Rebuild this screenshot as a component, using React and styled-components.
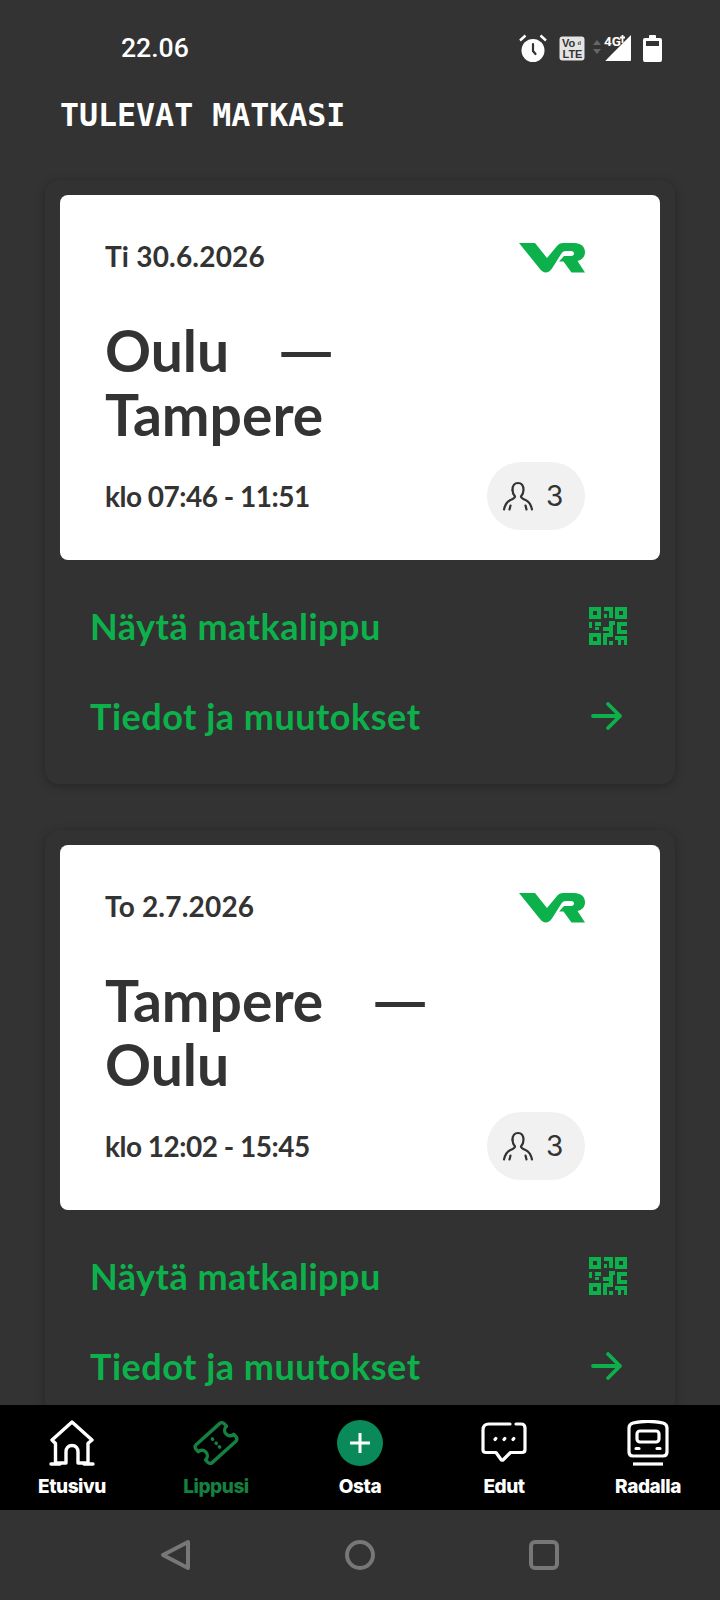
import React from 'react'
import styled, { createGlobalStyle } from 'styled-components'

const GREEN = '#0db14b'
const DARK = '#333333'

const GlobalStyle = createGlobalStyle`
  html, body {
    margin: 0;
    padding: 0;
    background: ${DARK};
  }
  * {
    box-sizing: border-box;
  }
`

const Screen = styled.div`
  width: 720px;
  height: 1600px;
  display: flex;
  flex-direction: column;
  overflow: hidden;
  background: ${DARK};
  font-family: "Lato", "Liberation Sans", sans-serif;
`

const StatusBar = styled.div`
  height: 72px;
  flex: none;
  display: flex;
  align-items: flex-end;
  justify-content: space-between;
  padding: 0 58px 7px 121px;
`

const Clock = styled.div`
  font-family: "Roboto", sans-serif;
  font-weight: 500;
  font-size: 26.6px;
  line-height: 34px;
  color: #fff;
`

const StatusIcons = styled.div`
  display: flex;
  align-items: center;
  gap: 12px;
  height: 34px;
`

const SignalSvg = styled.svg`
  margin-left: -4px;
`

const Content = styled.main`
  flex: 1;
  min-height: 0;
  overflow: hidden;
  display: flex;
  flex-direction: column;
  padding: 23px 45px 0;
`

const Heading = styled.h1`
  margin: 0 0 45px 15px;
  font-family: "DejaVu Sans Mono", monospace;
  font-weight: 700;
  font-size: 31.6px;
  line-height: 40px;
  color: #fff;
`

const TripList = styled.div`
  display: flex;
  flex-direction: column;
  gap: 46px;
`

const TripPanel = styled.section`
  flex: none;
  width: 630px;
  height: 604px;
  padding: 15px;
  border-radius: 14px;
  background: #323232;
  box-shadow: 0 2px 10px rgba(0, 0, 0, 0.28);
`

const TicketCard = styled.div`
  height: 365px;
  padding: 43px 75px 30px 45px;
  border-radius: 8px;
  background: #fff;
  color: ${DARK};
  display: flex;
  flex-direction: column;
`

const CardTop = styled.div`
  display: flex;
  justify-content: space-between;
  align-items: center;
  height: 36px;
`

const DateText = styled.div`
  font-size: 28px;
  font-weight: 700;
  line-height: 36px;
  letter-spacing: 0.2px;
`

const LogoSvg = styled.svg`
  margin-top: 4px;
`

const Route = styled.h2`
  margin: 44px 0 0;
  width: 420px;
  font-size: 57px;
  font-weight: 700;
  line-height: 64px;
`

const RouteDash = styled.span`
  display: inline-block;
  transform: scaleX(1.28);
  transform-origin: left center;
  margin-left: 34px;
`

const CardBottom = styled.div`
  margin-top: auto;
  display: flex;
  justify-content: space-between;
  align-items: center;
`

const TimeText = styled.div`
  font-size: 28px;
  font-weight: 700;
  line-height: 36px;
  letter-spacing: -0.5px;
  margin-top: -3px;
`

const Passengers = styled.div`
  width: 98px;
  height: 68px;
  border-radius: 34px;
  background: #f1f1f1;
  display: flex;
  align-items: center;
  gap: 12px;
  padding-left: 15px;
  font-family: "Inter", sans-serif;
  font-size: 28px;
  line-height: 64px;
  color: ${DARK};
  margin-top: -2px;
`

const ActionList = styled.div`
  display: flex;
  flex-direction: column;
  padding-top: 21px;
`

const ActionRow = styled.a`
  height: 90px;
  display: flex;
  align-items: center;
  justify-content: space-between;
  padding: 0 33px 0 30px;
  color: ${GREEN};
  font-size: 36px;
  font-weight: 700;
  letter-spacing: 0.5px;
`

const ArrowSvg = styled.svg`
  margin-right: 4px;
`

const BottomNav = styled.nav`
  flex: none;
  height: 105px;
  background: #000;
  display: grid;
  grid-template-columns: repeat(5, 1fr);
`

const NavItem = styled.a`
  display: flex;
  flex-direction: column;
  align-items: center;
  padding-top: 13px;
  color: ${p => (p.$active ? '#15803f' : '#fff')};
  font-family: "Inter", "Liberation Sans", sans-serif;
  font-size: 19px;
  line-height: 24px;
  font-weight: 800;
  letter-spacing: -0.45px;
`

const NavIcon = styled.div`
  height: 50px;
  display: flex;
  align-items: center;
  justify-content: center;
  margin-bottom: 7px;
`

const BuyCircle = styled.div`
  width: 46px;
  height: 46px;
  border-radius: 50%;
  background: #0a8a5a;
  display: flex;
  align-items: center;
  justify-content: center;
`

const SystemNav = styled.div`
  flex: none;
  height: 90px;
  background: #333;
  display: flex;
  justify-content: center;
  align-items: center;
  gap: 152px;
`

const AlarmIcon = () => (
  <svg width="28" height="30" viewBox="0 0 28 30" fill="none">
    <circle cx="14" cy="17.500" r="11.500" fill="#fff" />
    <path d="M14 11v7l2.500 3" stroke="#333" strokeWidth="2.200" strokeLinecap="round" />
    <path d="M1 7.500l5.500-5M27 7.500l-5.500-5" stroke="#fff" strokeWidth="2.400" />
  </svg>
)

const VolteIcon = () => (
  <svg width="26" height="25" viewBox="0 0 26 25">
    <rect x="0.5" y="0.500" width="25" height="24" rx="3" fill="#e4e4e4" />
    <text x="3" y="11" fontFamily="Liberation Sans" fontSize="11" fontWeight="700" fill="#333">Vo</text>
    <text x="18.500" y="9" fontFamily="Liberation Sans" fontSize="6" fontWeight="700" fill="#333">ıl</text>
    <text x="3.500" y="21.500" fontFamily="Liberation Sans" fontSize="11" fontWeight="700" fill="#333">LTE</text>
  </svg>
)

const SignalIcon = () => (
  <SignalSvg width="38" height="30" viewBox="0 0 38 30">
    <path d="M0 12l4-5 4 5zM0 16h8l-4 5z" fill="#666" />
    <path d="M38 2v25a1 1 0 0 1-1 1H12z" fill="#fff" />
    <path d="M12 28L35 2H11v26z" fill={DARK} />
    <text x="11" y="12.500" fontFamily="Roboto" fontSize="13.500" fontWeight="700" fill="#fff">4G</text>
    <path d="M29.500 2v8M27 4.500h5" stroke="#fff" strokeWidth="1.800" />
  </SignalSvg>
)

const BatteryIcon = () => (
  <svg width="19" height="27" viewBox="0 0 19 27">
    <path d="M6 1a1 1 0 0 1 1-1h5a1 1 0 0 1 1 1v2h4a2 2 0 0 1 2 2v20a2 2 0 0 1-2 2H2a2 2 0 0 1-2-2V5a2 2 0 0 1 2-2h4z" fill="#fff" />
    <rect x="3" y="6" width="13" height="5" fill="#333" />
  </svg>
)

const VrLogo = () => (
  <LogoSvg width="66" height="30" viewBox="0 0 66 30">
    <path
      d="M0 0H16L28 15 38 3C39.600 1 41.500 0 44 0H55C62 0 66 3.600 66 9.200 66 14 63 17 58.500 18L66 29.500H52.500L44.500 18.500H40L45 13H52C54 13 55 12 55 10.500 55 9 54 8 52 8H47C45 8 43.800 8.700 42.600 10.200L33 25.500C31 28.200 29.200 29.500 26.800 29.500 24.600 29.500 22.800 28.300 20.800 25.800z"
      fill={GREEN}
    />
  </LogoSvg>
)

const PersonIcon = () => (
  <svg width="32" height="30" viewBox="0 0 32 30" fill="none" stroke="#333" strokeWidth="2.200" strokeLinecap="round" strokeLinejoin="round">
    <path d="M10.500 9c0-4.500 2.200-7 5.500-7s5.500 2.500 5.500 7c0 3-1.300 5-2.500 6.500 0 1.500 2 2.500 4.500 3.500 3.500 1.500 5.500 5 6.500 9.500" />
    <path d="M10.500 9c0 3 1.300 5 2.500 6.500 0 1.500-2 2.500-4.500 3.500C5 20.500 3 24 2 28.500" />
    <path d="M7.500 28.500l1-4M24.500 28.500l-1-4" />
  </svg>
)

const QrIcon = () => (
  <svg width="38" height="38" viewBox="0 0 38 38" fill={GREEN}>
    <path fillRule="evenodd" d="M0 0h12v12H0zM4 4v4h4V4zM26 0h12v12H26zM30 4v4h4V4zM0 26h12v12H0zM4 30v4h4v-4z" />
    <path d="M15 0h9v11h-4V4h-5zM15 7h3v4h-3zM0 15h3v6H0zM6 15h6v4H6zM6 20h4v3H6zM26 14h-6v6h-6v4h10v-6h2zM14 26h4v12h-4zM18 26h5v4h-5zM28 15h10v4h-6v4h6v4H28zM20 34h4v4h-4zM20 24h4v6h-4zM26 29h12v9h-3v-5h-3v5h-3v-5h-3z" />
  </svg>
)

const ArrowIcon = () => (
  <ArrowSvg width="32" height="30" viewBox="0 0 32 30" fill="none" stroke={GREEN} strokeWidth="3.800" strokeLinecap="round" strokeLinejoin="round">
    <path d="M2 15h27M17 3l12 12-12 12" />
  </ArrowSvg>
)

const HomeIcon = () => (
  <svg width="46" height="46" viewBox="0 0 46 46" fill="none" stroke="#fff" strokeWidth="3.400" strokeLinecap="round" strokeLinejoin="round">
    <path d="M3 20L23 2l20 18-3 2.500-1 1V43H29V32c0-4-2.500-6.500-6-6.500S17 28 17 32v11H6.500V23.500L3 20z" />
    <path d="M2 44h9M35 44h9" />
  </svg>
)

const TicketIcon = () => (
  <svg width="48" height="48" viewBox="-24 -24 48 48" fill="none" stroke="#15803f" strokeWidth="3.400" strokeLinecap="round" strokeLinejoin="round">
    <g transform="rotate(-42)">
      <path d="M-16 -12H16a3 3 0 0 1 3 3v3.500a5.500 5.500 0 0 0 0 11V9a3 3 0 0 1-3 3H-16a3 3 0 0 1-3-3V5.500a5.500 5.500 0 0 0 0-11V-9a3 3 0 0 1 3-3z" />
      <path d="M0 -5.500v.5M0 0v.5M0 5v.5" />
    </g>
  </svg>
)

const ChatIcon = () => (
  <svg width="46" height="42" viewBox="0 0 46 42" fill="none" stroke="#fff" strokeWidth="3.200" strokeLinecap="round" strokeLinejoin="round">
    <path d="M29 2H8C4 2 2 4 2 8v20c0 2 1 2.500 3 2.500h10l5 7c.5 1 1.500 1 2.500 0l7-7H41c2 0 3-1 3-3V6c0-3-1.500-4-4-4h-5" />
    <path d="M14 17.500l.8-1M23 17.500l.8-1M32 17.500l.8-1" />
  </svg>
)

const TrainIcon = () => (
  <svg width="42" height="46" viewBox="0 0 42 46" fill="none" stroke="#fff" strokeWidth="3.200" strokeLinecap="round" strokeLinejoin="round">
    <path d="M2 8c0-3 1-4 4-5 9-2 21-2 30 0 3 1 4 2 4 5v24c0 3-1.500 4-4 4H6c-2.500 0-4-1-4-4z" />
    <rect x="10" y="11" width="22" height="11" rx="3" />
    <path d="M9 28.500h3M30 28.500h3" />
    <path d="M6 44h30" strokeLinecap="butt" />
  </svg>
)

const PlusIcon = () => (
  <svg width="24" height="24" viewBox="0 0 24 24" stroke="#fff" strokeWidth="3">
    <path d="M12 2v20M2 12h20" />
  </svg>
)

const trips = [
  { date: 'Ti 30.6.2026', from: 'Oulu', to: 'Tampere', time: 'klo 07:46 - 11:51', passengers: 3 },
  { date: 'To 2.7.2026', from: 'Tampere', to: 'Oulu', time: 'klo 12:02 - 15:45', passengers: 3 },
]

const navItems = [
  { label: 'Etusivu', icon: <HomeIcon /> },
  { label: 'Lippusi', icon: <TicketIcon />, active: true },
  { label: 'Osta', icon: <BuyCircle><PlusIcon /></BuyCircle> },
  { label: 'Edut', icon: <ChatIcon /> },
  { label: 'Radalla', icon: <TrainIcon /> },
]

export default function App() {
  return (
    <Screen>
      <GlobalStyle />
      <StatusBar>
        <Clock>22.06</Clock>
        <StatusIcons>
          <AlarmIcon />
          <VolteIcon />
          <SignalIcon />
          <BatteryIcon />
        </StatusIcons>
      </StatusBar>
      <Content>
        <Heading>TULEVAT MATKASI</Heading>
        <TripList>
          {trips.map(trip => (
            <TripPanel key={trip.date}>
              <TicketCard>
                <CardTop>
                  <DateText>{trip.date}</DateText>
                  <VrLogo />
                </CardTop>
                <Route>{trip.from} <RouteDash>—</RouteDash> {trip.to}</Route>
                <CardBottom>
                  <TimeText>{trip.time}</TimeText>
                  <Passengers>
                    <PersonIcon />
                    {trip.passengers}
                  </Passengers>
                </CardBottom>
              </TicketCard>
              <ActionList>
                <ActionRow>Näytä matkalippu <QrIcon /></ActionRow>
                <ActionRow>Tiedot ja muutokset <ArrowIcon /></ActionRow>
              </ActionList>
            </TripPanel>
          ))}
        </TripList>
      </Content>
      <BottomNav>
        {navItems.map(item => (
          <NavItem key={item.label} $active={item.active}>
            <NavIcon>{item.icon}</NavIcon>
            {item.label}
          </NavItem>
        ))}
      </BottomNav>
      <SystemNav>
        <svg width="32" height="32" viewBox="0 0 32 32" fill="none" stroke="#777" strokeWidth="4" strokeLinejoin="round">
          <path d="M28 3v26L3 16z" />
        </svg>
        <svg width="32" height="32" viewBox="0 0 32 32" fill="none" stroke="#777" strokeWidth="4">
          <circle cx="16" cy="16" r="13" />
        </svg>
        <svg width="32" height="32" viewBox="0 0 32 32" fill="none" stroke="#777" strokeWidth="4">
          <rect x="3" y="3" width="26" height="26" rx="4" />
        </svg>
      </SystemNav>
    </Screen>
  )
}
